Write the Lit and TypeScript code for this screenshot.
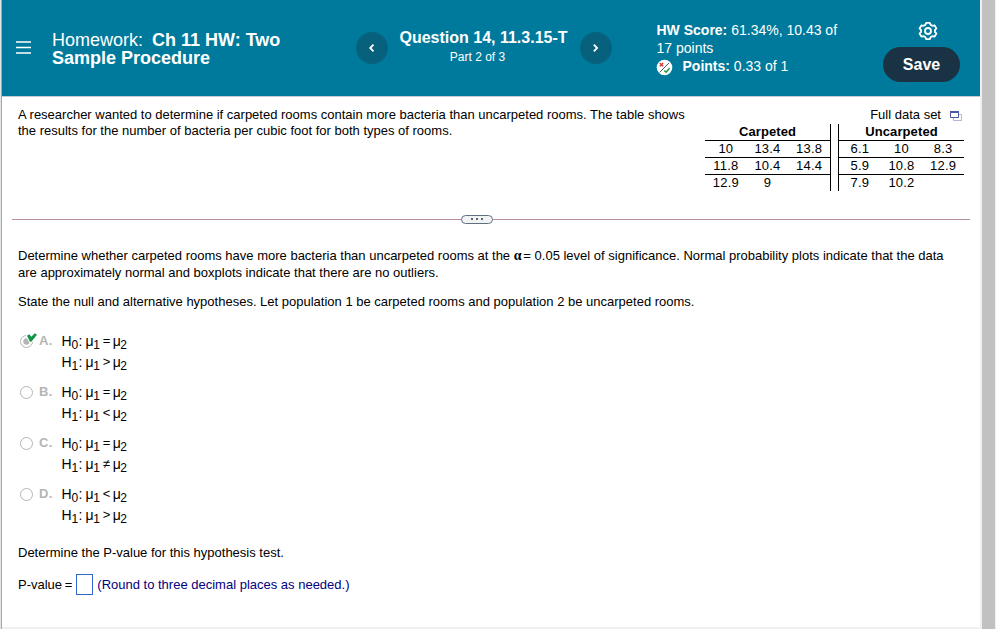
import { LitElement, html, css, svg, nothing } from "lit";
import { customElement, property } from "lit/decorators.js";

const CHOICES = [
  { letter: "A", h0: "=", h1: ">", selected: true },
  { letter: "B", h0: "=", h1: "<", selected: false },
  { letter: "C", h0: "=", h1: "≠", selected: false },
  { letter: "D", h0: "<", h1: ">", selected: false },
];

const TABLES = [
  { title: "Carpeted", rows: [["10", "13.4", "13.8"], ["11.8", "10.4", "14.4"], ["12.9", "9", ""]] },
  { title: "Uncarpeted", rows: [["6.1", "10", "8.3"], ["5.9", "10.8", "12.9"], ["7.9", "10.2", ""]] },
];

@customElement("homework-header")
export class HomeworkHeader extends LitElement {
  static styles = css`
    :host { display: flex; height: 96px; box-sizing: border-box; background: #007a9c; color: #fff; }
    svg { display: block; }
    .menu { width: 15px; margin: 41px 0 0 14px; flex: none; }
    .title { width: 304px; margin: 31px 0 0 21px; font-size: 18px; line-height: 18px; white-space: nowrap; flex: none; }
    .title b { margin-left: 4px; }
    .nav { display: flex; width: 256px; justify-content: space-between; margin-top: 32px; height: 33px; flex: none; }
    .circle { width: 32px; height: 32px; border-radius: 50%; background: #07617d; }
    .question { text-align: center; white-space: nowrap; margin-top: -4px; }
    .question b { display: block; font-size: 16px; line-height: 20px; margin-left: -1px; }
    .question span { display: block; font-size: 12px; line-height: 18px; padding-right: 13px; }
    .score { margin: 21px 0 0 44.5px; width: 226.5px; flex: none; font-size: 14px; line-height: 18px; white-space: nowrap; }
    .points { display: flex; }
    .points svg { margin: 2px 10px 0 -1px; }
    .actions { display: flex; flex-direction: column; align-items: center; width: 77px; padding-top: 21px; flex: none; }
    .gear { margin-left: 13px; }
    .save { width: 77px; height: 35px; margin-top: 6px; border-radius: 18px; background: #193244; font-size: 16px; font-weight: bold; line-height: 35px; text-align: center; }
  `;

  private arrow(d: string) {
    return html`<div class="circle"><svg width="32" height="32" fill="none" stroke="#fff" stroke-width="1.8">${svg`<path d=${d} />`}</svg></div>`;
  }

  render() {
    return html`
      <svg class="menu" width="15" height="14" stroke="#fff" stroke-width="1.7"><path d="M0 1H15M0 6.5H15M0 12H15" /></svg>
      <div class="title">Homework: <b>Ch 11 HW: Two</b><br /><strong>Sample Procedure</strong></div>
      <div class="nav">
        ${this.arrow("M17.5 12.7L14.2 16L17.5 19.3")}
        <div class="question"><b>Question 14, 11.3.15-T</b><span>Part 2 of 3</span></div>
        ${this.arrow("M13.8 12.7L17.1 16L13.8 19.3")}
      </div>
      <div class="score">
        <div><b>HW Score:</b> 61.34%, 10.43 of</div>
        <div>17 points</div>
        <div class="points">
          <svg width="17" height="17" fill="none">
            <circle cx="8.5" cy="8.5" r="7.8" fill="#fff" />
            <path d="M3.5 13.5L13 4" stroke="#555" />
            <path d="M3.8 4L7.2 7.3M7.2 4L3.8 7.3" stroke="#d23b3f" stroke-width="1.4" />
            <path d="M8.3 11.5L10 13.2L13.6 9.3" stroke="#159447" stroke-width="1.5" />
          </svg>
          <span><b>Points:</b> 0.33 of 1</span>
        </div>
      </div>
      <div class="actions">
        <svg class="gear" width="20" height="20" viewBox="0 0 20 20" fill="none" stroke="#fff" stroke-width="1.8" stroke-linejoin="round">
          <path d="M8.2 1.8H11.8L12.7 3.9L14.3 4.8L16.6 4.4L18.4 7.5L16.9 9.2V10.8L18.4 12.5L16.6 15.6L14.3 15.2L12.7 16.1L11.8 18.2H8.2L7.3 16.1L5.7 15.2L3.4 15.6L1.6 12.5L3.1 10.8V9.2L1.6 7.5L3.4 4.4L5.7 4.8L7.3 3.9Z" />
          <circle cx="10" cy="10" r="3" />
        </svg>
        <div class="save">Save</div>
      </div>
    `;
  }
}

@customElement("data-tables")
export class DataTables extends LitElement {
  static styles = css`
    :host { display: block; width: 259px; font-size: 13px; margin-top: -1px; }
    .full { display: flex; justify-content: flex-end; align-items: center; height: 17px; line-height: 17px; padding-right: 2px; }
    .full svg { margin-left: 9px; margin-top: 4px; }
    .pair { display: flex; justify-content: space-between; margin-top: 1px; }
    .table { width: 125px; height: 67px; border-right: 1px solid #000; }
    .table.second { border-right: 0; border-left: 1px solid #000; }
    .name { height: 16px; line-height: 16px; font-weight: bold; letter-spacing: 0.1px; text-align: center; }
    .row { display: grid; grid-template-columns: repeat(3, 1fr); height: 16px; border-top: 1px solid #000; line-height: 15px; text-align: center; letter-spacing: 0.2px; }
  `;

  render() {
    return html`
      <div class="full">Full data set
        <svg width="12" height="11" fill="none"><path d="M3.5 5V9.5H11.5V3.5H8" stroke="#b3b6dc" /><path d="M.5 .5H8.5V6.5H.5Z" fill="#fff" stroke="#4a58a5" /><path d="M0 1H9" stroke="#4a58a5" stroke-width="2" /></svg>
      </div>
      <div class="pair">
        ${TABLES.map((t, i) => html`
          <div class="table ${i ? "second" : ""}">
            <div class="name">${t.title}</div>
            ${t.rows.map((r) => html`<div class="row">${r.map((c) => html`<span>${c}</span>`)}</div>`)}
          </div>`)}
      </div>
    `;
  }
}

@customElement("hypothesis-choice")
export class HypothesisChoice extends LitElement {
  @property() letter = "";
  @property() h0 = "";
  @property() h1 = "";
  @property({ type: Boolean }) selected = false;

  static styles = css`
    :host { display: flex; height: 51px; }
    .radio { width: 19px; height: 20px; flex: none; overflow: visible; }
    .letter { width: 22.6px; flex: none; color: #b5b5b5; font-weight: bold; font-size: 13px; line-height: 20px; letter-spacing: 0.3px; }
    .line { display: flex; height: 21px; line-height: 20px; font-size: 14px; white-space: pre; }
    .sym { width: 7.6px; }
    .h { width: 9.8px; }
    .n { width: 7px; font-size: 12px; padding-top: 4px; }
    .colon { width: 7.2px; }
    .op { width: 12.6px; padding-left: 2.6px; box-sizing: border-box; font-size: 13px; }
  `;

  private line(sub: string, op: string) {
    return html`<div class="line"><span class="h">H</span><span class="n">${sub}</span><span class="colon">:</span><span class="sym">μ</span><span class="n">1</span><span class="op">${op}</span><span class="sym">μ</span><span class="n">2</span></div>`;
  }

  render() {
    return html`
      <svg class="radio" width="19" height="20" fill="none">
        <circle cx="6.5" cy="10.5" r="6" stroke="#b5b5b5" />
        ${this.selected ? svg`<circle cx="6.5" cy="10.5" r="3.2" fill="#b5b5b5" /><path d="M7 4.8L9.3 3.2L11.3 5.8L14.8 2.2L17 3.8L11.3 10.8H10Z" fill="#129447" stroke="#fff" stroke-width="2" paint-order="stroke" />` : nothing}
      </svg>
      <span class="letter">${this.letter}.</span>
      <div>${this.line("0", this.h0)}${this.line("1", this.h1)}</div>
    `;
  }
}

@customElement("app-root")
export class AppRoot extends LitElement {
  static styles = css`
    :host { display: flex; width: 996px; height: 629px; overflow: hidden; background: #fff; color: #000; font-family: "Liberation Sans", Arial, sans-serif; font-size: 13px; }
    .edge { width: 1px; border-right: 1px solid #a3a5a7; background: #e4e7ea; flex: none; }
    .page { width: 978px; height: 627px; border-bottom: 2px solid #f0f0f0; flex: none; }
    .rail { width: 13px; border-left: 2px solid #f0f0f0; border-right: 1px solid #f0f0f0; background: #c1c1c1; flex: none; }
    .problem { display: flex; justify-content: space-between; height: 123px; padding: 10px 16px 0 16px; box-sizing: border-box; border-top: 1px solid #c4cbd3; white-space: nowrap; }
    .line { line-height: 16px; height: 16px; }
    .divider { display: flex; align-items: center; height: 10px; margin: -5px 10px 0; }
    .rule { height: 1px; background: #ba8e9d; flex: 1; }
    .rule.left { flex: none; width: 449px; }
    .handle { display: flex; justify-content: center; align-items: center; gap: 3px; width: 32px; height: 9px; box-sizing: border-box; border: 1px solid #5f7080; border-radius: 5px; background: #f1f3f5; }
    .handle i { width: 2px; height: 2px; background: #5f6872; }
    .work { padding: 23px 16px 0; white-space: nowrap; }
    .p17 { height: 17px; line-height: 17px; }
    .state { margin-top: 12px; }
    .choices { padding: 21px 0 0 2px; }
    .final { margin-top: 9px; }
    .answer { display: flex; align-items: center; height: 22px; margin-top: 12px; }
    .label { word-spacing: -1px; }
    .box { width: 17px; height: 21px; border: 1px solid #3366cc; box-sizing: border-box; margin: 0 4px; }
    .hint { color: #000080; }
    .eq { word-spacing: -1.8px; }
    .alpha { font-family: "Liberation Serif", serif; font-weight: bold; font-size: 14px; line-height: 1; }
  `;

  render() {
    return html`
      <div class="edge"></div>
      <main class="page">
        <homework-header></homework-header>
        <section class="problem">
          <div>
            <div class="line">A researcher wanted to determine if carpeted rooms contain more bacteria than uncarpeted rooms. The table shows</div>
            <div class="line">the results for the number of bacteria per cubic foot for both types of rooms.</div>
          </div>
          <data-tables></data-tables>
        </section>
        <div class="divider"><span class="rule left"></span><span class="handle"><i></i><i></i><i></i></span><span class="rule"></span></div>
        <section class="work">
          <div class="p17">Determine whether carpeted rooms have more bacteria than uncarpeted rooms at the <span class="alpha">α</span><span class="eq"> =</span> 0.05 level of significance. Normal probability plots indicate that the data</div>
          <div class="p17">are approximately normal and boxplots indicate that there are no outliers.</div>
          <div class="p17 state">State the null and alternative hypotheses. Let population 1 be carpeted rooms and population 2 be uncarpeted rooms.</div>
          <div class="choices">
            ${CHOICES.map((c) => html`<hypothesis-choice .letter=${c.letter} .h0=${c.h0} .h1=${c.h1} .selected=${c.selected}></hypothesis-choice>`)}
          </div>
          <div class="p17 final">Determine the P-value for this hypothesis test.</div>
          <div class="answer"><span class="label">P-value =</span><span class="box"></span><span class="hint">(Round to three decimal places as needed.)</span></div>
        </section>
      </main>
      <div class="rail"></div>
    `;
  }
}
